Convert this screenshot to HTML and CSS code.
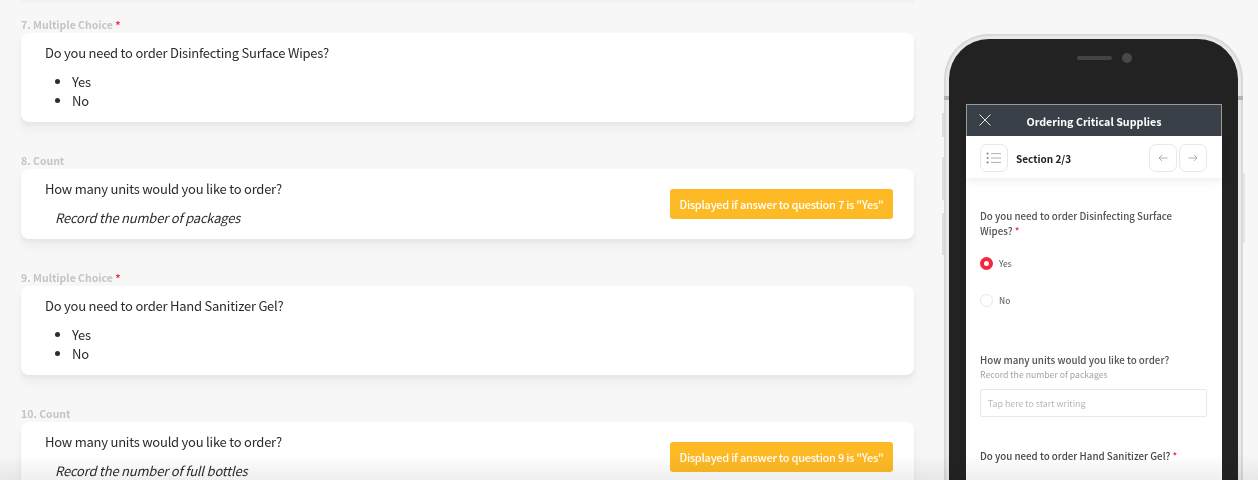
FILE: index.html
```html
<!DOCTYPE html>
<html lang="en">
<head>
<meta charset="utf-8">
<title>Ordering Critical Supplies</title>
<link rel="stylesheet" href="styles.css">
</head>
<body>
<div class="page">
  <main class="questions">
    <div class="prev-shadow"></div>
    <section class="question">
      <h3 class="label">7. Multiple Choice <span class="req">*</span></h3>
      <div class="card">
        <div class="card-body">
          <p class="q">Do you need to order Disinfecting Surface Wipes?</p>
          <ul class="opts"><li>Yes</li><li>No</li></ul>
        </div>
      </div>
    </section>
    <section class="question">
      <h3 class="label">8. Count</h3>
      <div class="card card-count">
        <div class="card-body">
          <p class="q">How many units would you like to order?</p>
          <p class="hint">Record the number of packages</p>
        </div>
        <span class="badge">Displayed if answer to question 7 is "Yes"</span>
      </div>
    </section>
    <section class="question">
      <h3 class="label">9. Multiple Choice <span class="req">*</span></h3>
      <div class="card">
        <div class="card-body">
          <p class="q">Do you need to order Hand Sanitizer Gel?</p>
          <ul class="opts"><li>Yes</li><li>No</li></ul>
        </div>
      </div>
    </section>
    <section class="question">
      <h3 class="label">10. Count</h3>
      <div class="card card-count">
        <div class="card-body">
          <p class="q">How many units would you like to order?</p>
          <p class="hint">Record the number of full bottles</p>
        </div>
        <span class="badge">Displayed if answer to question 9 is "Yes"</span>
      </div>
    </section>
  </main>
  <aside class="phone-col">
    <div class="phone">
      <span class="btn btn-a"></span><span class="btn btn-b"></span><span class="btn btn-c"></span><span class="btn btn-d"></span>
      <span class="tick tick-l"></span><span class="tick tick-r"></span>
      <div class="bezel">
        <div class="sensors"><span class="speaker"></span><span class="camera"></span></div>
        <div class="screen">
          <header class="app-head">
            <svg class="close" width="14" height="14" viewBox="0 0 14 14" aria-hidden="true"><path d="M1.5 1.5l11 11M12.5 1.5l-11 11"/></svg>
            <span class="app-title">Ordering Critical Supplies</span>
          </header>
          <div class="section-bar">
            <span class="sq">
              <svg width="16" height="12" viewBox="0 0 16 12" aria-hidden="true"><circle cx="1.6" cy="1.6" r="1.1"/><circle cx="1.6" cy="6" r="1.1"/><circle cx="1.6" cy="10.4" r="1.1"/><path d="M5 1.6h10M5 6h10M5 10.4h10"/></svg>
            </span>
            <span class="section-name">Section 2/3</span>
            <span class="sq nav">
              <svg width="10" height="8" viewBox="0 0 10 8" aria-hidden="true"><path d="M9.5 4H1M4 1L1 4l3 3"/></svg>
            </span>
            <span class="sq">
              <svg width="10" height="8" viewBox="0 0 10 8" aria-hidden="true"><path d="M.5 4H9M6 1l3 3-3 3"/></svg>
            </span>
          </div>
          <div class="form">
            <p class="f-q f-first">Do you need to order Disinfecting Surface Wipes? <span class="req">*</span></p>
            <div class="radio"><span class="dot on"></span>Yes</div>
            <div class="radio"><span class="dot"></span>No</div>
            <p class="f-q f-second">How many units would you like to order?</p>
            <p class="f-hint">Record the number of packages</p>
            <div class="input">Tap here to start writing</div>
            <p class="f-q f-third">Do you need to order Hand Sanitizer Gel? <span class="req">*</span></p>
          </div>
        </div>
      </div>
    </div>
  </aside>
  <div class="fade"></div>
</div>
</body>
</html>
```
FILE: styles.css
```css
* { box-sizing: border-box; }
html, body { margin: 0; height: 100%; }
body { overflow: hidden; background: #f7f7f7; font-family: "Noto Sans CJK JP", "Noto Sans", sans-serif; color: #2b2b2b; }
p, h3, ul { margin: 0; padding: 0; }

.page { position: relative; display: flex; height: 480px; overflow: hidden; }

.questions { width: 893px; margin-left: 21px; flex: none; display: flex; flex-direction: column; gap: 30px; }
.questions > * { flex: none; }
.prev-shadow { height: 3px; margin-bottom: -17px; background: #f2f2f2; }
.label { font-size: 10.5px; line-height: 17px; font-weight: 700; color: #c4c4c4; }
.req { color: #f5263f; }
.card { display: flex; align-items: center; justify-content: space-between; padding: 9px 21px 12px 24px; background: #fff; border-radius: 8px; box-shadow: 0 3px 3px #e7e7e7, 0 8px 8px 1px #efefef; }
.card-count { padding-bottom: 10px; }
.q { font-size: 13px; letter-spacing: -.235px; line-height: 22px; }
.opts { margin-top: 8px; padding-left: 27px; font-size: 13px; letter-spacing: -.2px; line-height: 19px; }
.hint { margin: 7px 0 0 10px; font-size: 13px; letter-spacing: -.2px; line-height: 22px; font-style: italic; }
.badge { flex: none; height: 30px; width: 223px; justify-content: center; display: flex; align-items: center; background: #feba24; border-radius: 3px; color: #fff; font-size: 11px; letter-spacing: -.25px; font-weight: 500; }

.phone-col { flex: none; margin-left: 30px; padding-top: 34px; }
.phone { position: relative; width: 299px; height: 520px; border: 2px solid #d9d9d9; border-bottom: 0; border-radius: 45px 45px 0 0; padding: 3px; background: #e8e8e8; }
.btn { position: absolute; width: 2px; background: #dedede; }
.btn-a { left: -4px; top: 77px; height: 24px; }
.btn-b { left: -4px; top: 121px; height: 43px; }
.btn-c { left: -4px; top: 177px; height: 42px; }
.btn-d { right: -4px; top: 137px; height: 70px; background: #e6e6e6; }
.tick { position: absolute; top: 60px; width: 5px; height: 4px; background: #b4b4b4; }
.tick-l { left: -2px; }
.tick-r { right: -2px; }
.bezel { height: 100%; background: #222; border-radius: 40px 40px 0 0; padding: 65px 16px 0 17px; position: relative; }
.sensors { position: absolute; top: 14px; left: 22px; right: 0; display: flex; align-items: center; justify-content: center; gap: 10px; }
.speaker { width: 35px; height: 4px; border-radius: 2px; background: #444; }
.camera { width: 10px; height: 10px; border-radius: 50%; background: #484848; }
.screen { height: 100%; background: #fff; }

.app-head { position: relative; height: 32px; padding-top: 2px; display: flex; align-items: center; justify-content: center; background: #3a4048; border: 1px solid #9a9a9a; border-bottom: 0; color: #fff; }
.close { position: absolute; left: 11px; top: 8px; fill: none; stroke: #e6e6e6; stroke-width: 1; }
.app-title { font-size: 10.7px; font-weight: 700; }
.section-bar { display: flex; align-items: center; height: 42px; padding: 1px 15px 0 14px; background: #fff; box-shadow: 0 4px 8px rgba(0,0,0,.06); position: relative; }
.sq { width: 28px; height: 28px; flex: none; display: flex; align-items: center; justify-content: center; border: 1px solid #e4e8ef; border-radius: 7px; margin-right: 2px; }
.sq:last-child { margin-right: 0; }
.sq svg { fill: none; stroke: #8a8f96; stroke-width: .7; }
.sq circle { fill: #8a8f96; stroke: none; }
.nav { margin-left: auto; }
.section-name { margin: 2px 0 0 6px; font-size: 10px; font-weight: 700; color: #222; }

.form { padding: 0 15px 0 14px; color: #4e5257; }
.f-q { font-size: 9.75px; line-height: 15px; font-weight: 500; }
.f-first { padding: 31px 24px 0 0; }
.f-second { margin-top: 46px; }
.f-third { margin-top: 32px; color: #44484d; }
.radio { display: flex; align-items: center; gap: 6px; height: 14px; margin-top: 17px; font-size: 8.5px; }
.radio + .radio { margin-top: 23px; }
.dot { width: 13px; height: 13px; border-radius: 50%; border: 1px solid #e6e6e6; }
.dot.on { border: 4px solid #f5263f; background: #fff; }
.f-hint { font-size: 8.7px; line-height: 13px; color: #a3a3a3; }
.input { height: 28px; margin-top: 8px; padding-left: 7px; display: flex; align-items: center; border: 1px solid #e4e8ef; border-radius: 2px; font-size: 8.8px; color: #b8b8b8; }

.fade { position: absolute; left: 0; right: 0; bottom: 0; height: 26px; background: linear-gradient(#fff, #efefef); mix-blend-mode: multiply; pointer-events: none; }
```
